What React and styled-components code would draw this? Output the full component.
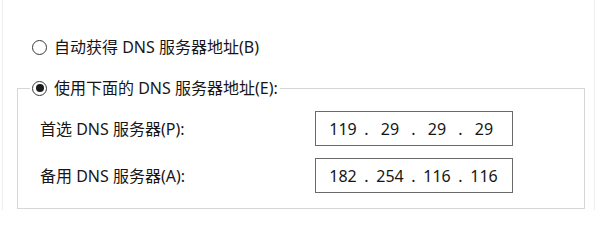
import React from "react";
import styled, { createGlobalStyle } from "styled-components";

const Global = createGlobalStyle`
  html, body { margin: 0; padding: 0; background: #ffffff; }
  body {
    font-family: "Noto Sans", "Noto Sans CJK SC", sans-serif;
    color: #161616;
  }
`;

const Frame = styled.div`
  box-sizing: border-box;
  width: 593px;
  height: 210px;
  margin-left: 2px;
  border-left: 1px solid #ededed;
  border-right: 1px solid #ededed;
  padding-top: 37px;
`;

const RadioRow = styled.label`
  display: flex;
  align-items: center;
  height: 20px;
  gap: 7px;
  font-size: 16px;
  line-height: 20px;
  white-space: nowrap;
  margin-left: ${(p) => p.$indent || 0}px;
`;

const RadioDot = styled.span`
  box-sizing: border-box;
  width: 15px;
  height: 15px;
  min-width: 15px;
  border-radius: 50%;
  border: 1.5px solid #3a3a3a;
  display: flex;
  align-items: center;
  justify-content: center;
  flex: none;
  &::after {
    content: "";
    width: 8px;
    height: 8px;
    border-radius: 50%;
    background: ${(p) => (p.$checked ? "#1a1a1a" : "transparent")};
  }
`;

const Group = styled.fieldset`
  box-sizing: border-box;
  width: 568px;
  margin: 21px 0 0 14px;
  padding: 13px 0 15px 22px;
  border: 1px solid #d6d6d6;
  min-width: 0;
`;

const Legend = styled.legend`
  margin-left: -10px;
  padding: 0 2px;
`;

const Grid = styled.div`
  display: grid;
  grid-template-columns: 275px 198px;
  row-gap: 12px;
  align-items: center;
`;

const FieldLabel = styled.span`
  font-size: 16px;
  line-height: 20px;
  white-space: nowrap;
`;

const IpBox = styled.div`
  box-sizing: border-box;
  height: 35px;
  border: 1px solid #6a6a6a;
  display: flex;
  align-items: center;
  padding-left: 9px;
  font-family: "Noto Sans", sans-serif;
  font-size: 16px;
  color: #161616;
`;

const Octet = styled.span`
  width: 36px;
  text-align: center;
`;

const Dot = styled.span`
  width: 11px;
  text-align: center;
`;

function Ip({ value }) {
  const parts = value.split(".");
  const out = [];
  parts.forEach((p, i) => {
    if (i > 0) out.push(<Dot key={"d" + i}>.</Dot>);
    out.push(<Octet key={"o" + i}>{p}</Octet>);
  });
  return <IpBox>{out}</IpBox>;
}

export default function App() {
  return (
    <>
      <Global />
      <Frame>
        <RadioRow $indent={29}>
          <RadioDot />
          自动获得 DNS 服务器地址(B)
        </RadioRow>
        <Group>
          <Legend>
            <RadioRow>
              <RadioDot $checked />
              使用下面的 DNS 服务器地址(E):
            </RadioRow>
          </Legend>
          <Grid>
            <FieldLabel>首选 DNS 服务器(P):</FieldLabel>
            <Ip value="119.29.29.29" />
            <FieldLabel>备用 DNS 服务器(A):</FieldLabel>
            <Ip value="182.254.116.116" />
          </Grid>
        </Group>
      </Frame>
    </>
  );
}
